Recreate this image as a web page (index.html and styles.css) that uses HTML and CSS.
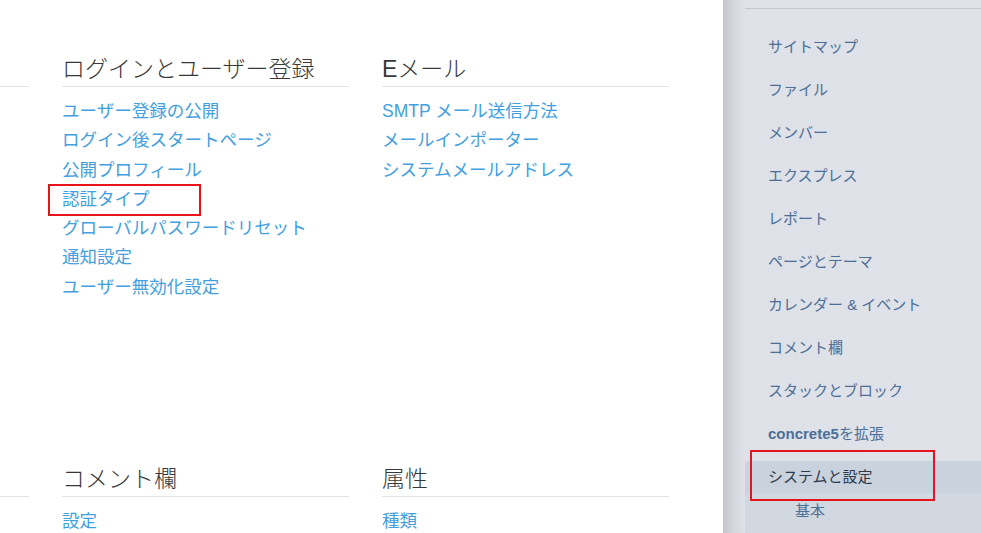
FILE: index.html
```html
<!DOCTYPE html>
<html lang="ja">
<head>
<meta charset="utf-8">
<title>システムと設定</title>
<link rel="stylesheet" href="styles.css">
</head>
<body>
<div class="page">
  <main class="main">
    <div class="sections">
      <section class="section">
        <div class="section-rule"></div>
      </section>
      <section class="section">
        <h2 class="section-title">ログインとユーザー登録</h2>
        <ul class="links">
          <li><a href="#">ユーザー登録の公開</a></li>
          <li><a href="#">ログイン後スタートページ</a></li>
          <li><a href="#">公開プロフィール</a></li>
          <li class="marked"><a href="#">認証タイプ</a></li>
          <li><a href="#">グローバルパスワードリセット</a></li>
          <li><a href="#">通知設定</a></li>
          <li><a href="#">ユーザー無効化設定</a></li>
        </ul>
      </section>
      <section class="section">
        <h2 class="section-title">Eメール</h2>
        <ul class="links">
          <li><a href="#">SMTP メール送信方法</a></li>
          <li><a href="#">メールインポーター</a></li>
          <li><a href="#">システムメールアドレス</a></li>
        </ul>
      </section>
      <section class="section">
        <div class="section-rule"></div>
      </section>
      <section class="section">
        <h2 class="section-title">コメント欄</h2>
        <ul class="links">
          <li><a href="#">設定</a></li>
        </ul>
      </section>
      <section class="section">
        <h2 class="section-title">属性</h2>
        <ul class="links">
          <li><a href="#">種類</a></li>
        </ul>
      </section>
    </div>
  </main>
  <aside class="sidebar">
    <nav class="sidebar-inner">
      <ul class="nav">
        <li class="nav-item"><a href="#">サイトマップ</a></li>
        <li class="nav-item"><a href="#">ファイル</a></li>
        <li class="nav-item"><a href="#">メンバー</a></li>
        <li class="nav-item"><a href="#">エクスプレス</a></li>
        <li class="nav-item"><a href="#">レポート</a></li>
        <li class="nav-item"><a href="#">ページとテーマ</a></li>
        <li class="nav-item"><a href="#">カレンダー &amp; イベント</a></li>
        <li class="nav-item"><a href="#">コメント欄</a></li>
        <li class="nav-item"><a href="#">スタックとブロック</a></li>
        <li class="nav-item"><a href="#"><span class="brand">concrete5</span>を拡張</a></li>
      </ul>
      <div class="nav-group">
        <div class="nav-active"><a href="#">システムと設定</a></div>
        <ul class="subnav">
          <li><a href="#">基本</a></li>
        </ul>
      </div>
    </nav>
  </aside>
</div>
</body>
</html>
```

FILE: styles.css
```css
* {
  box-sizing: border-box;
}

html, body {
  margin: 0;
  padding: 0;
  background: #ffffff;
}

body {
  width: 981px;
  height: 533px;
  overflow: hidden;
  font-family: "Liberation Sans", "Noto Sans CJK JP", sans-serif;
}

a {
  text-decoration: none;
}

ul {
  list-style: none;
  margin: 0;
  padding: 0;
}

.page {
  display: flex;
  height: 533px;
  overflow: hidden;
}

.main {
  width: 723px;
  flex: none;
  overflow: hidden;
  padding-top: 54px;
}

.sections {
  display: grid;
  grid-template-columns: repeat(3, 287px);
  grid-template-rows: 410px auto;
  column-gap: 33px;
  margin-left: -258px;
}

.section-title {
  margin: 0;
  font-size: 23px;
  font-weight: 300;
  line-height: 30px;
  color: #383838;
  padding-bottom: 2px;
  border-bottom: 1px solid #e2e2e2;
  white-space: nowrap;
}

.section-rule {
  height: 33px;
  border-bottom: 1px solid #e2e2e2;
}

.links {
  margin-top: 10px;
}

.links li {
  font-size: 17.5px;
  line-height: 29.3px;
  white-space: nowrap;
}

.links a {
  color: #43a0e0;
}

.marked {
  position: relative;
}

.marked::after {
  content: "";
  position: absolute;
  left: -14px;
  top: -1px;
  width: 149px;
  height: 28px;
  border: 2px solid #e8141c;
}

.sidebar {
  flex: 1;
  display: flex;
  flex-direction: column;
  background: linear-gradient(90deg, #c2c6cc 0px, #d3d6dd 10px, #dee1e8 22px, #dfe2e9 100%);
  padding-left: 22px;
  padding-top: 8px;
}

.sidebar-inner {
  flex: 1;
  display: flex;
  flex-direction: column;
  border-top: 1px solid #c5c7cb;
  padding-top: 16px;
}

.nav-item {
  height: 43px;
  line-height: 43px;
  padding-left: 23px;
  font-size: 15px;
  white-space: nowrap;
}

.nav-item a {
  color: #4c6f98;
}

.brand {
  font-weight: 700;
  font-size: 15px;
}

.nav-group {
  flex: 1;
  margin-top: 6px;
  background: #d1d8e0;
  border-radius: 4px 0 0 0;
}

.nav-active {
  position: relative;
  height: 32px;
  line-height: 32px;
  padding-left: 23px;
  background: #cad3dd;
  border-radius: 4px 0 0 0;
  font-size: 15px;
}

.nav-active a {
  color: #2a3a4d;
}

.nav-active::after {
  content: "";
  position: absolute;
  left: 5px;
  top: -11px;
  width: 181px;
  height: 47px;
  border: 2px solid #e8141c;
}

.subnav li {
  height: 36px;
  line-height: 36px;
  padding-left: 50px;
  font-size: 15px;
}

.subnav a {
  color: #4c6f98;
}
```
